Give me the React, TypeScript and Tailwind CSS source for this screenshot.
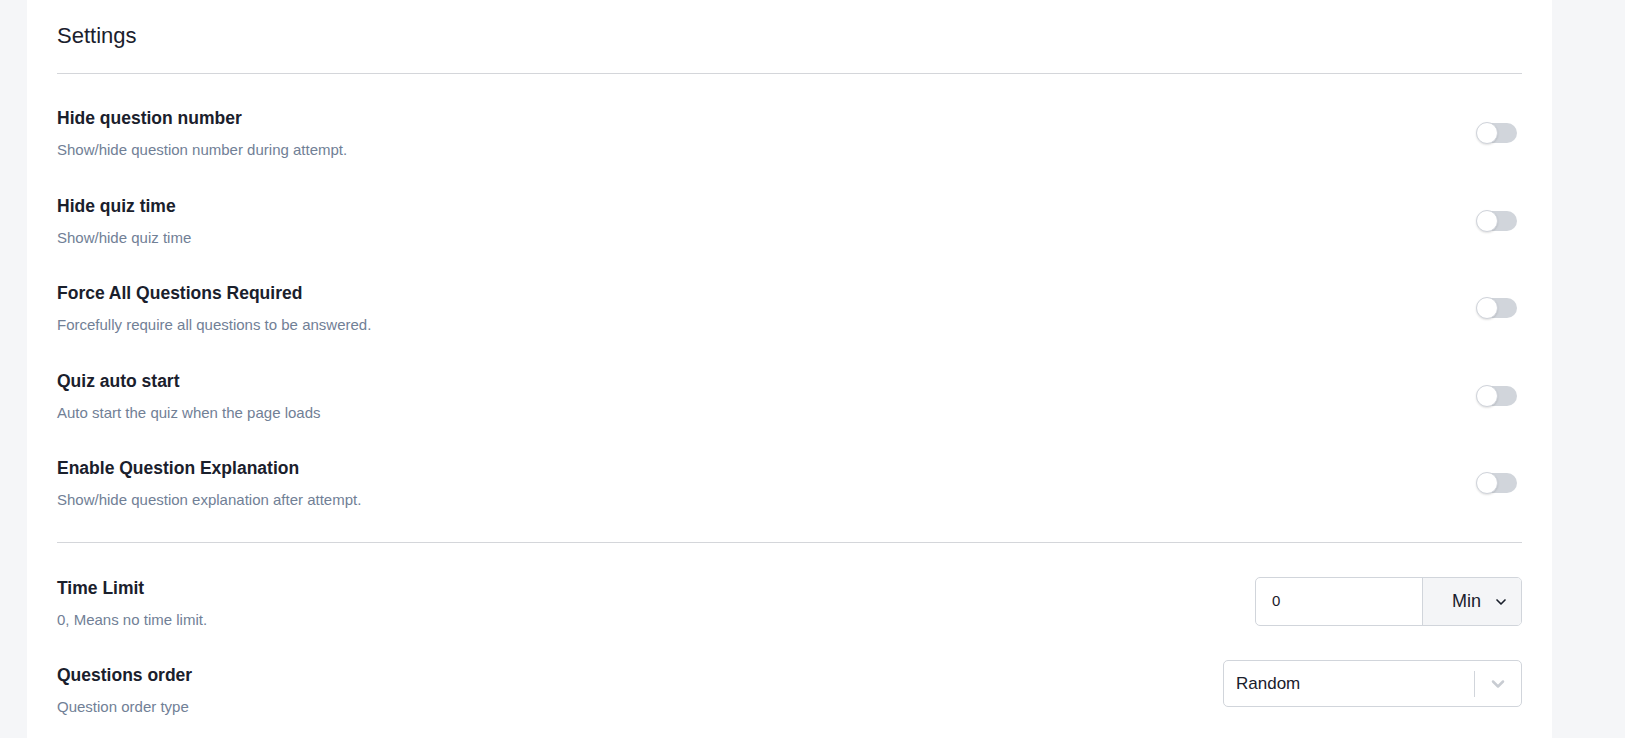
import { useState } from 'react';

type ToggleRow = {
  id: string;
  title: string;
  desc: string;
};

const toggleRows: ToggleRow[] = [
  { id: 'hide_number', title: 'Hide question number', desc: 'Show/hide question number during attempt.' },
  { id: 'hide_time', title: 'Hide quiz time', desc: 'Show/hide quiz time' },
  { id: 'force_required', title: 'Force All Questions Required', desc: 'Forcefully require all questions to be answered.' },
  { id: 'auto_start', title: 'Quiz auto start', desc: 'Auto start the quiz when the page loads' },
  { id: 'explanation', title: 'Enable Question Explanation', desc: 'Show/hide question explanation after attempt.' },
];

function Toggle({ on, onClick }: { on: boolean; onClick: () => void }) {
  return (
    <button
      onClick={onClick}
      className={
        'relative w-[40px] h-[20px] rounded-full mr-[5px] shrink-0 ' +
        (on ? 'bg-[#3b82f6]' : 'bg-[#d1d5db]')
      }
    >
      <span
        className={
          'absolute top-[-1px] w-[22px] h-[22px] rounded-full bg-white border border-[#cfd3da] shadow-[0_1px_2px_rgba(0,0,0,0.12)] ' +
          (on ? 'left-[19px]' : 'left-[-1px]')
        }
      />
    </button>
  );
}

function RowText({ title, desc }: { title: string; desc: string }) {
  return (
    <div className="flex flex-col gap-[10px]">
      <div className="text-[17.5px] leading-[24px] font-bold text-[#1a202c]">{title}</div>
      <div className="text-[15px] leading-[20px] text-[#718096]">{desc}</div>
    </div>
  );
}

function Chevron({ className }: { className: string }) {
  return (
    <svg viewBox="0 0 24 24" fill="none" stroke="currentColor" strokeLinecap="round" strokeLinejoin="round" className={className}>
      <path d="M6 9l6 6 6-6" />
    </svg>
  );
}

export default function App() {
  const [toggles, setToggles] = useState<Record<string, boolean>>({});
  const [timeLimit, setTimeLimit] = useState('0');

  return (
    <div
      className="w-full h-[738px] bg-[#f5f6f8] flex pl-[27px] pr-[73px] overflow-hidden"
      style={{ fontFamily: '"Liberation Sans", Arial, sans-serif' }}
    >
      <div className="flex-1 bg-white px-[30px]">
        {/* header */}
        <div className="pt-[22px] pb-[23px] text-[22px] leading-[28px] text-[#1a202c]">Settings</div>
        <div className="border-t border-[#d4d6da]" />

        {/* switches */}
        <div className="flex flex-col gap-[33.5px] py-[32px]">
          {toggleRows.map((row) => (
            <div key={row.id} className="flex items-center justify-between">
              <RowText title={row.title} desc={row.desc} />
              <Toggle
                on={!!toggles[row.id]}
                onClick={() => setToggles({ ...toggles, [row.id]: !toggles[row.id] })}
              />
            </div>
          ))}
        </div>
        <div className="border-t border-[#d4d6da]" />

        {/* time limit */}
        <div className="flex items-start justify-between pt-[33px]">
          <RowText title="Time Limit" desc="0, Means no time limit." />
          <div className="flex mt-[1px] h-[49px] w-[267px] border border-[#d1d5db] rounded-[5px] overflow-hidden">
            <input
              value={timeLimit}
              onChange={(e) => setTimeLimit(e.target.value)}
              className="w-[166px] pl-[16px] text-[15px] text-[#1a202c] outline-none"
            />
            <div className="flex-1 flex items-center justify-end gap-[12px] pr-[12px] bg-[#f4f5f7] border-l border-[#d1d5db]">
              <span className="text-[18px] text-[#1a202c]">Min</span>
              <Chevron className="w-[16px] h-[16px] text-[#1a202c] stroke-[2.5]" />
            </div>
          </div>
        </div>

        {/* questions order */}
        <div className="flex items-start justify-between pt-[33px]">
          <RowText title="Questions order" desc="Question order type" />
          <div className="flex items-center -mt-[3px] h-[47px] w-[299px] border border-[#d1d5db] rounded-[5px]">
            <span className="flex-1 pl-[12px] text-[17px] text-[#1a202c]">Random</span>
            <div className="w-px h-[26px] bg-[#d1d5db]" />
            <div className="w-[46px] flex items-center justify-center">
              <Chevron className="w-[20px] h-[20px] text-[#c8ccd2] stroke-[3]" />
            </div>
          </div>
        </div>
      </div>
    </div>
  );
}
